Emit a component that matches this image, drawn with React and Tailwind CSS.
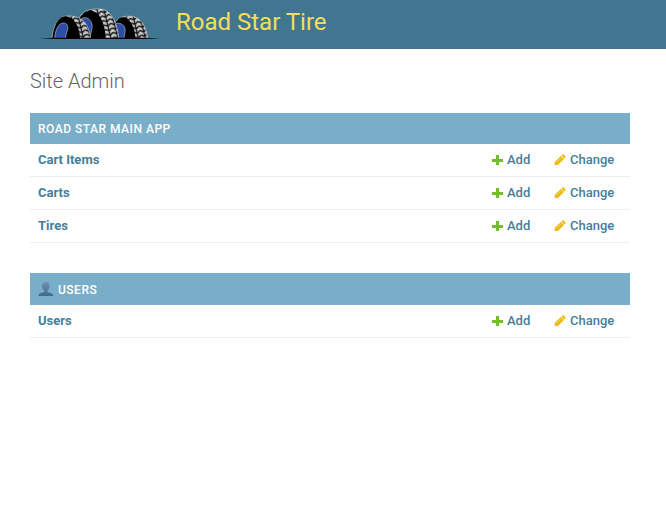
const modules = [
  { name: 'Road Star Main App', models: ['Cart Items', 'Carts', 'Tires'] },
  { name: 'Users', icon: true, models: ['Users'] },
];

function Logo() {
  return (
    <svg className="h-8 w-[120px] shrink-0" viewBox="32 24 360 96" role="img" aria-label="Road Star Tire logo">
      <defs>
        <pattern id="tread" width="20" height="14" patternUnits="userSpaceOnUse" patternTransform="rotate(-14)">
          <rect width="20" height="14" fill="#c9c9c9" />
          <path d="M0 1L10 8L20 1M0 15L10 22L20 15M0 -13L10 -6L20 -13M10 0V14" fill="none" stroke="#101010" strokeWidth="4" />
        </pattern>
      </defs>
      <g strokeLinejoin="round">
        <path d="M262 63C268 51 285 48 304 49C338 51 350 82 355 115H260Z" fill="url(#tread)" stroke="#c8ced2" strokeWidth="2" />
        <path d="M260 66C270 50 286 49 295 57C310 69 317 91 318 115H258Z" fill="#000" />
        <path d="M258 72C270 66 284 73 287 86C289 96 284 106 284 115H256Z" fill="#2f4da5" stroke="#a9bdd4" strokeWidth="2" />
        <path d="M151 52C162 31 183 26 213 27C250 30 264 75 268 115H200Z" fill="url(#tread)" stroke="#c8ced2" strokeWidth="2" />
        <path d="M150 56C164 29 190 25 206 43C222 62 228 89 229 115H165Z" fill="#000" />
        <path d="M158 55C171 49 184 57 188 72C191 86 183 101 181 115H158Z" fill="#2f4da5" stroke="#a9bdd4" strokeWidth="2" />
        <path d="M68 115C72 75 88 48 114 48C156 47 177 67 184 115Z" fill="url(#tread)" stroke="#c8ced2" strokeWidth="2" />
        <path d="M69 115C73 75 88 49 109 49C135 51 151 80 152 115Z" fill="#000" />
        <path d="M76 115C78 87 89 69 102 69C114 69 118 80 114 92C111 101 109 107 109 115Z" fill="#2f4da5" stroke="#a9bdd4" strokeWidth="2" />
      </g>
      <path d="M32 115L80 113H345L392 115L345 117H80Z" fill="#000" />
    </svg>
  );
}

function PlusIcon() {
  return (
    <svg className="size-[11px]" viewBox="0 0 11 11" aria-hidden="true">
      <path d="M4 0H7V4H11V7H7V10H4V7H0V4H4Z" fill="#70bf2b" />
    </svg>
  );
}

function PencilIcon() {
  return (
    <svg className="size-3" viewBox="0 0 12 12" aria-hidden="true">
      <path d="M.5 11.2L1 7.8L6.8 2L10 5.1L4.2 10.8Z" fill="#efb80b" />
      <path d="M7.4 1.5L8.4 .5Q9 0 9.6 .5L11.4 2.3Q12 2.9 11.4 3.5L10.5 4.5Z" fill="#efb80b" />
      <path d="M2.8 8.1L7 4" stroke="#fbe3a0" strokeWidth=".6" />
    </svg>
  );
}

function PersonIcon() {
  return (
    <svg className="h-4 w-4" viewBox="0 0 16 16" aria-hidden="true">
      <defs>
        <linearGradient id="person" x2="0" y2="1">
          <stop stopColor="#6f8fae" />
          <stop offset="1" stopColor="#43698f" />
        </linearGradient>
      </defs>
      <path d="M7.8 0C10.4 0 11.8 1.8 11.5 4.4C11.3 6.2 10.6 7.6 9.5 8.4V9.8C11 11 15.3 10.8 15.3 13.6V14H.4V13.6C.4 10.8 4.7 11 6.2 9.8V8.4C5 7.6 4.3 6.2 4.1 4.4C3.8 1.8 5.2 0 7.8 0Z" fill="url(#person)" />
    </svg>
  );
}

function Module({ name, icon, models }) {
  return (
    <table className="mb-[30px] w-full border-collapse text-[13px] leading-4 text-[#447e9b]">
      <caption className="bg-[#79aec8] px-2 pt-[9px] pb-[7px] text-left text-xs leading-[15px] font-medium tracking-[0.5px] text-white uppercase">
        <a href="#" className="flex items-center gap-1">
          {icon && <PersonIcon />}
          {name}
        </a>
      </caption>
      <tbody>
        {models.map((model) => (
          <tr key={model} className="border-b border-[#eee]">
            <th scope="row" className="p-2 text-left font-bold">
              <a href="#">{model}</a>
            </th>
            <td className="w-[62px] py-2 pr-2 pl-2 font-medium">
              <a href="#" className="flex items-center gap-1">
                <PlusIcon />
                Add
              </a>
            </td>
            <td className="w-[84px] p-2 font-medium">
              <a href="#" className="flex items-center gap-1">
                <PencilIcon />
                Change
              </a>
            </td>
          </tr>
        ))}
      </tbody>
    </table>
  );
}

export default function App() {
  return (
    <div className="min-h-screen bg-white font-[Roboto,sans-serif]">
      <header className="flex items-start gap-4 bg-[#417690] px-10 pt-2 pb-[9px]">
        <Logo />
        <h1 className="text-2xl leading-7 font-normal text-[#f5dd5d]">
          <a href="#">Road Star Tire</a>
        </h1>
      </header>
      <main className="pt-5 pr-9 pl-[30px]">
        <h2 className="mb-5 text-xl leading-6 font-light text-[#666]">Site Admin</h2>
        {modules.map((module) => (
          <Module key={module.name} {...module} />
        ))}
      </main>
    </div>
  );
}
